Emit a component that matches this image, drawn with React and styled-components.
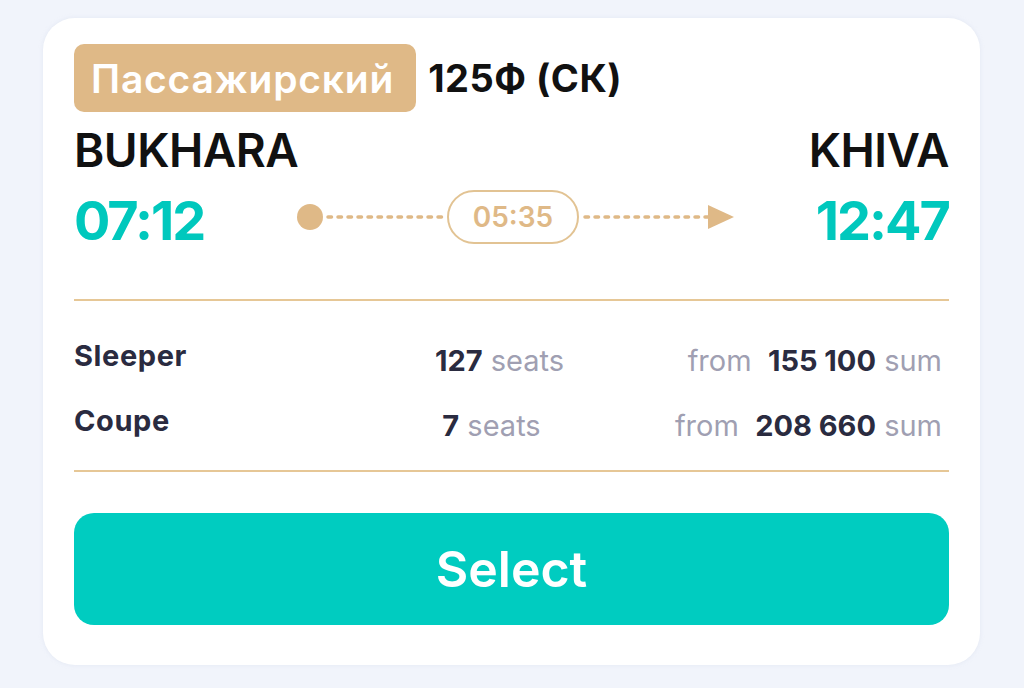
import React from "react";
import styled, { createGlobalStyle } from "styled-components";

const Global = createGlobalStyle`
  html, body { margin: 0; padding: 0; background: #f1f4fb; }
  body { font-family: Inter, "Noto Sans", sans-serif; }
`;

const Page = styled.div`
  width: 1024px;
  height: 688px;
  box-sizing: border-box;
  padding: 18px 44px 0 43px;
`;

const Card = styled.div`
  background: #fff;
  border-radius: 32px;
  height: 647px;
  box-sizing: border-box;
  padding: 26px 31px 0 31px;
  box-shadow: 0 0 4px rgba(200, 210, 230, 0.35);
  display: flex;
  flex-direction: column;
`;

const Header = styled.div`
  display: flex;
  align-items: center;
  gap: 12px;
  height: 68px;
`;

const Badge = styled.div`
  background: #dfb987;
  color: #fff;
  border-radius: 10px;
  height: 68px;
  padding: 0 22px 0 17px;
  display: flex;
  align-items: center;
  font-size: 39px;
  font-weight: 600;
  letter-spacing: 0.8px;
`;

const TrainNo = styled.div`
  font-size: 38px;
  font-weight: 700;
  color: #111;
  letter-spacing: 0.5px;
`;

const Cities = styled.div`
  display: flex;
  justify-content: space-between;
  margin-top: 10px;
  height: 56px;
  align-items: center;
  font-size: 46px;
  font-weight: 600;
  color: #111;
  letter-spacing: -0.5px;
`;

const TimeRow = styled.div`
  display: flex;
  align-items: center;
  justify-content: space-between;
  height: 76px;
  margin-top: 4px;
`;

const Time = styled.div`
  font-size: 54px;
  font-weight: 700;
  color: #00c8bd;
  width: 140px;
  text-align: ${(p) => (p.$right ? "right" : "left")};
  letter-spacing: -2px;
`;

const Track = styled.div`
  display: flex;
  align-items: center;
  width: 436px;
  margin: 0 auto 6px 83px;
`;

const Duration = styled.div`
  height: 54px;
  width: 132px;
  box-sizing: border-box;
  border: 2px solid #e2c393;
  border-radius: 28px;
  display: flex;
  align-items: center;
  justify-content: center;
  font-size: 28px;
  font-weight: 600;
  color: #dfb987;
  flex-shrink: 0;
`;

const Spacer = styled.div`
  height: ${(p) => p.$h}px;
  flex-shrink: 0;
`;

const Divider = styled.div`
  height: 2px;
  background: #e6c796;
  flex-shrink: 0;
`;

const Rows = styled.div`
  display: flex;
  flex-direction: column;
  padding-top: 27px;
  height: 169px;
  box-sizing: border-box;
  flex-shrink: 0;
`;

const Row = styled.div`
  display: grid;
  grid-template-columns: 1fr 1fr 1fr;
  align-items: center;
  height: 65px;
  font-size: 29px;
`;

const ClassName = styled.div`
  font-weight: 700;
  font-size: 29px;
  letter-spacing: 0.6px;
  color: #2a2b40;
  transform: translateY(-5px);
`;

const Seats = styled.div`
  text-align: center;
  transform: translateX(${(p) => p.$shift}px);
`;

const Price = styled.div`
  text-align: right;
  padding-right: 7px;
`;

const Strong = styled.span`
  font-weight: 700;
  color: #2a2b40;
`;

const Muted = styled.span`
  font-weight: 400;
  color: #a09fb2;
`;

const Button = styled.button`
  margin-top: 41px;
  height: 112px;
  border: none;
  border-radius: 20px;
  background: #00ccc0;
  color: #fff;
  font-family: Inter, sans-serif;
  font-size: 50px;
  font-weight: 600;
  cursor: pointer;
  flex-shrink: 0;
`;

function DotLine({ width, arrow }) {
  return (
    <svg width={width} height="26" viewBox={`0 0 ${width} 26`} style={{ display: "block", flexShrink: 0 }}>
      {arrow ? null : <circle cx="13" cy="13" r="13" fill="#dfb987" />}
      <line
        x1={arrow ? 6 : 31}
        y1="13"
        x2={arrow ? width - 26 : width - 2}
        y2="13"
        stroke="#dfb987"
        strokeWidth="3.5"
        strokeLinecap="round"
        strokeDasharray="3.5 6.5"
      />
      {arrow ? <polygon points={`${width - 26},1 ${width},13 ${width - 26},25`} fill="#dfb987" /> : null}
    </svg>
  );
}

export default function App() {
  return (
    <>
      <Global />
      <Page>
        <Card>
          <Header>
            <Badge>Пассажирский</Badge>
            <TrainNo>125Ф (СК)</TrainNo>
          </Header>
          <Cities>
            <span>BUKHARA</span>
            <span>KHIVA</span>
          </Cities>
          <TimeRow>
            <Time>07:12</Time>
            <Track>
              <DotLine width={150} />
              <Duration>05:35</Duration>
              <DotLine width={155} arrow />
            </Track>
            <Time $right>12:47</Time>
          </TimeRow>
          <Spacer $h={41} />
          <Divider />
          <Rows>
            <Row>
              <ClassName>Sleeper</ClassName>
              <Seats $shift={-12}>
                <Strong>127</Strong> <Muted>seats</Muted>
              </Seats>
              <Price>
                <Muted>from</Muted>&nbsp; <Strong>155 100</Strong> <Muted>sum</Muted>
              </Price>
            </Row>
            <Row>
              <ClassName>Coupe</ClassName>
              <Seats $shift={-20}>
                <Strong>7</Strong> <Muted>seats</Muted>
              </Seats>
              <Price>
                <Muted>from</Muted>&nbsp; <Strong>208 660</Strong> <Muted>sum</Muted>
              </Price>
            </Row>
          </Rows>
          <Divider />
          <Button>Select</Button>
        </Card>
      </Page>
    </>
  );
}
